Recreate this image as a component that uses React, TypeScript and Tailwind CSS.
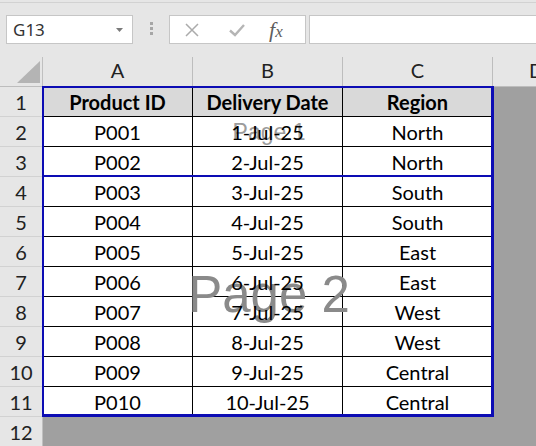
const rows = [
  { id: 'P001', date: '1-Jul-25', region: 'North' },
  { id: 'P002', date: '2-Jul-25', region: 'North' },
  { id: 'P003', date: '3-Jul-25', region: 'South' },
  { id: 'P004', date: '4-Jul-25', region: 'South' },
  { id: 'P005', date: '5-Jul-25', region: 'East' },
  { id: 'P006', date: '6-Jul-25', region: 'East' },
  { id: 'P007', date: '7-Jul-25', region: 'West' },
  { id: 'P008', date: '8-Jul-25', region: 'West' },
  { id: 'P009', date: '9-Jul-25', region: 'Central' },
  { id: 'P010', date: '10-Jul-25', region: 'Central' },
];

const cell = "w-[150px] h-full flex items-center justify-center border-r border-black";

function FormulaBar() {
  return (
    <div className="h-[57px] pt-[2px] bg-[#e6e6e6]">
      <div className="h-full border-t border-[#d2d2d2] flex items-start pt-[12px]">
        {/* Name box */}
        <div className="ml-[6px] w-[127px] h-[29px] bg-white border border-[#c6c6c6] flex items-center justify-between pl-[6px] pr-[9px] text-[17px] text-[#333] font-['Noto_Sans',sans-serif]">
          <span>G13</span>
          <svg width="7" height="4" viewBox="0 0 7 4">
            <path d="M0 0 L7 0 L3.5 4 Z" fill="#7a7a7a" />
          </svg>
        </div>
        {/* Grip */}
        <div className="ml-[17px] mt-[7px] flex flex-col gap-[2px]">
          <div className="w-[3px] h-[3px] bg-[#a6a6a6]" />
          <div className="w-[3px] h-[3px] bg-[#a6a6a6]" />
          <div className="w-[3px] h-[3px] bg-[#a6a6a6]" />
        </div>
        {/* Cancel / Enter / Insert function */}
        <div className="ml-[16px] w-[137px] h-[29px] bg-white border border-[#c6c6c6] flex items-center">
          <svg className="ml-[14px]" width="16" height="16" viewBox="0 0 16 16">
            <path d="M2 2 L14 14 M14 2 L2 14" stroke="#ababab" strokeWidth="1.5" />
          </svg>
          <svg className="ml-[28px]" width="18" height="16" viewBox="0 0 18 16">
            <path d="M2 8.5 L7 13 L16 3" stroke="#b5b5b5" strokeWidth="2.4" fill="none" />
          </svg>
          <span className="ml-[23px] text-[22px] italic text-[#5e5e5e] font-['Liberation_Serif',serif] leading-none">
            f<span className="text-[17px]">x</span>
          </span>
        </div>
        <div className="ml-[3px] flex-1 h-[29px] bg-white border border-[#c6c6c6] border-r-0" />
      </div>
    </div>
  );
}

export default function App() {
  return (
    <div className="w-[536px] h-[446px] overflow-hidden bg-[#e6e6e6] font-['Lato',sans-serif] text-[20px] text-black">
      <FormulaBar />
      <div className="flex">
        {/* Row headers */}
        <div className="w-[43px] shrink-0 bg-[#e6e6e6] border-r border-[#c0c0c0]">
          <div className="h-[30px] border-b border-[#bdbdbd] relative">
            <svg className="absolute left-[17px] top-[4px]" width="23" height="22" viewBox="0 0 23 22">
              <path d="M23 0 L23 22 L0 22 Z" fill="#b4b4b4" />
            </svg>
          </div>
          {Array.from({ length: 12 }, (_, i) => (
            <div key={i} className="h-[30px] border-b border-[#d2d2d2] flex items-center justify-center text-[#222]">
              {i + 1}
            </div>
          ))}
        </div>

        <div className="flex-1">
          {/* Column headers */}
          <div className="h-[30px] flex border-b border-[#bdbdbd] text-[#222]">
            {['A', 'B', 'C'].map((c) => (
              <div key={c} className="w-[150px] flex items-end justify-center pb-[1px] border-r border-[#bdbdbd]">
                {c}
              </div>
            ))}
            <div className="flex-1 flex items-end pb-[1px] pl-[36px]">D</div>
          </div>

          {/* Sheet body */}
          <div className="relative h-[400px] bg-[#a0a0a0]">
            <div className="w-[450px] bg-white">
              <div className="h-[30px] flex border-b border-black bg-[#d9d9d9] font-bold">
                <div className={cell}><span className="relative z-10">Product ID</span></div>
                <div className={cell}><span className="relative z-10">Delivery Date</span></div>
                <div className={cell}><span className="relative z-10">Region</span></div>
              </div>
              {rows.map((r) => (
                <div key={r.id} className="h-[30px] flex border-b border-black">
                  <div className={cell}><span className="relative z-10">{r.id}</span></div>
                  <div className={cell}><span className="relative z-10">{r.date}</span></div>
                  <div className={cell}><span className="relative z-10">{r.region}</span></div>
                </div>
              ))}
            </div>

            {/* Page watermarks */}
            <div className="absolute left-0 top-[30px] w-[450px] h-[30px] flex items-center justify-center pointer-events-none">
              <span className="text-[23px] text-[#9c9c9c] font-['Liberation_Sans',sans-serif] leading-none ml-[2px] mt-[1px]">Page 1</span>
            </div>
            <div className="absolute left-0 top-[90px] w-[450px] h-[240px] flex items-center justify-center pointer-events-none">
              <span className="text-[51px] text-[#8a8a8a] font-['Liberation_Sans',sans-serif] leading-none ml-[2px] mt-[-6px]">Page 2</span>
            </div>

            {/* Print area + page break */}
            <div className="absolute left-[-1px] top-[-1px] w-[452px] h-[331px] border-l-2 border-t-2 border-r-[3px] border-b-[3px] border-[#0c0cb4] pointer-events-none" />
            <div className="absolute left-0 top-[88px] w-[450px] h-[2px] bg-[#0c0cb4] pointer-events-none" />
          </div>
        </div>
      </div>
    </div>
  );
}
